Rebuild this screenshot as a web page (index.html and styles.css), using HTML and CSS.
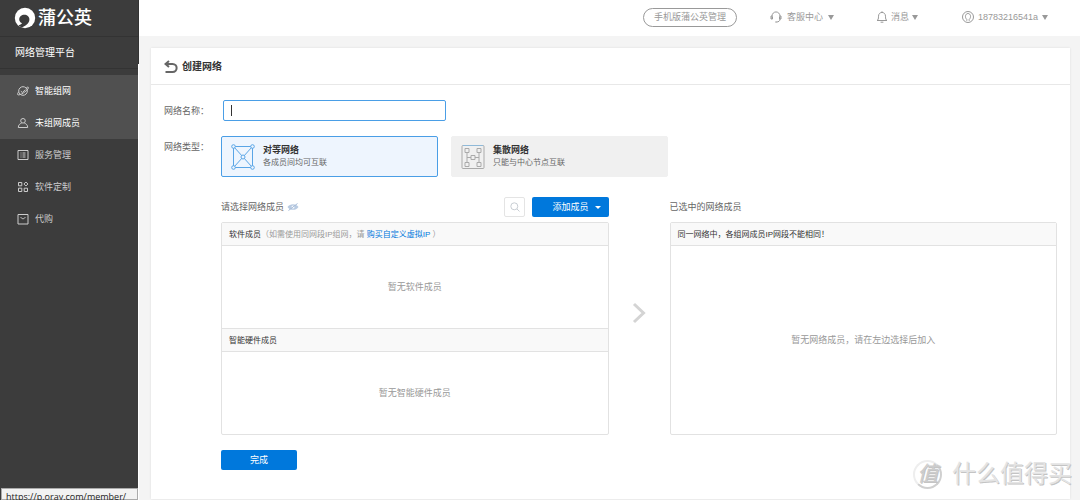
FILE: index.html
```html
<!DOCTYPE html>
<html lang="zh-CN">
<head>
<meta charset="utf-8">
<title>创建网络</title>
<link rel="stylesheet" href="styles.css">
</head>
<body>
<div class="app">
  <aside class="sidebar">
    <div class="brand">
      <svg class="brand-logo" width="22" height="22" viewBox="0 0 22 22"><circle cx="11" cy="11" r="10.2" fill="#fff"/><path d="M7.500 20.500C11 19 15.400 16.500 15.400 12.400C15.400 9.600 13 7.800 10.400 7.800C7.600 7.800 5.200 9.800 5.200 12.400C5.200 14.300 6.500 15.600 8 16C7.400 17.400 6 18 4.200 18.300Z" fill="#3c3c3c"/></svg>
      <span>蒲公英</span>
    </div>
    <div class="platform">网络管理平台</div>
    <nav class="menu">
      <div class="menu-group">
        <a class="menu-item" href="#"><svg width="12" height="12" viewBox="0 0 12 12"><circle cx="6" cy="6" r="4.300"/><path d="M9.400 2.500C11.500 1.600 12 2.400 10.800 4C9 6.400 5 9.400 2 9.900C0 10.200 0.200 8.600 1.700 7M3.800 6.200L5.400 7.500L8.300 4.600"/></svg>智能组网</a>
        <a class="menu-item" href="#"><svg width="12" height="12" viewBox="0 0 12 12"><circle cx="6" cy="3.800" r="2.300"/><path d="M4.600 6.200C2.800 6.700 1.300 8 1.300 10.500H10.700C10.700 8 9.200 6.700 7.400 6.200"/></svg>未组网成员</a>
      </div>
      <a class="menu-item" href="#"><svg width="12" height="12" viewBox="0 0 12 12"><path d="M1 1.500H11V10.500H1ZM3.500 4H4.500M5.500 4H8.500M3.500 6H4.500M5.500 6H8.500M3.500 8H4.500M5.500 8H8.500"/></svg>服务管理</a>
      <a class="menu-item" href="#"><svg width="12" height="12" viewBox="0 0 12 12"><path d="M1.500 1.500H4.800V4.800H1.500ZM1.500 7.200H4.800V10.500H1.500ZM7.200 7.200H10.500V10.500H7.200ZM8.900 1L10.900 3L8.900 5L6.900 3Z"/></svg>软件定制</a>
      <a class="menu-item" href="#"><svg width="12" height="12" viewBox="0 0 12 12"><path d="M1 1.500H11V11H1ZM3.800 4C4.300 6.300 7.700 6.300 8.200 4"/></svg>代购</a>
    </nav>
    <div class="status-bar">https://p.oray.com/member/</div>
  </aside>
  <div class="page">
    <header class="topbar">
      <button class="pill" type="button">手机版蒲公英管理</button>
      <button class="top-item service" type="button"><svg width="12" height="12" viewBox="0 0 12 12"><path d="M2 8V5.500C2 -0.600 10 -0.600 10 5.500V8C10 10 8.500 11 6.700 11M2 5H1V8H2.500V5.500M10 5H11V8H9.500V5.500M5.200 11H7"/></svg>客服中心<i class="caret"></i></button>
      <button class="top-item news" type="button"><svg width="12" height="12" viewBox="0 0 12 12"><path d="M1 9.500H11C9.800 8.800 9.500 8 9.500 5.200C9.500 0.200 2.500 0.200 2.500 5.200C2.500 8 2.200 8.800 1 9.500ZM4.600 11.200H7.400M6 1.500V0.300"/></svg>消息<i class="caret"></i></button>
      <button class="top-item account" type="button"><svg width="12" height="12" viewBox="0 0 12 12"><circle cx="6" cy="6" r="5.500"/><path d="M4.800 9.800V8.400C2.500 6.500 3.300 2.500 6 2.500C8.700 2.500 9.500 6.500 7.200 8.400V9.800"/></svg>18783216541a<i class="caret"></i></button>
    </header>
    <main class="card">
      <h1 class="card-title"><svg width="14" height="14" viewBox="0 0 14 14"><path d="M5 1L1.500 4L5 7M1.500 4H8.500C14 4 14 12 8.500 12H1.500"/></svg>创建网络</h1>
      <form class="form">
        <div class="field name-field">
          <label class="label" for="net-name">网络名称：</label>
          <input class="text-input" id="net-name" type="text">
        </div>
        <div class="field type-field">
          <span class="label">网络类型：</span>
          <div class="types">
            <label class="type selected">
              <input class="type-radio" type="radio" name="type" checked>
              <svg width="24" height="26" viewBox="0 0 24 26"><path d="M2.500 2.500H21.500V23.500H2.500ZM3 3L21 23M21 3L3 23"/><g class="nodes"><circle cx="2.500" cy="2.500" r="1.800"/><circle cx="21.500" cy="2.500" r="1.800"/><circle cx="2.500" cy="23.500" r="1.800"/><circle cx="21.500" cy="23.500" r="1.800"/><circle cx="12" cy="13" r="2"/></g></svg>
              <span class="type-text"><b>对等网络</b><span>各成员间均可互联</span></span>
            </label>
            <label class="type">
              <input class="type-radio" type="radio" name="type">
              <svg width="24" height="26" viewBox="0 0 24 26"><rect x="1" y="1.500" width="22" height="23" rx="1"/><path d="M2 1.500H22" stroke="#8fb9d8"/><path d="M4 4.500H8V8.500H4ZM16 4.500H20V8.500H16ZM4 18.500H8V22.500H4ZM16 18.500H20V22.500H16ZM10 11.500H14V15.500H10ZM6 8.500V18.500M18 8.500V18.500M6 13.500H10M14 13.500H18"/></svg>
              <span class="type-text"><b>集散网络</b><span>只能与中心节点互联</span></span>
            </label>
          </div>
        </div>
        <div class="members">
          <section class="column">
            <div class="column-head">
              <span>请选择网络成员</span>
              <svg class="eye" width="12" height="8" viewBox="0 0 12 8"><path d="M0.500 4C3 0.200 9 0.200 11.500 4C9 7.800 3 7.800 0.500 4Z" fill="#b9cbe2"/><circle cx="6" cy="4" r="1.500" fill="#fff"/><path d="M1.500 7.500L10.500 0.500" stroke="#a5bbd8"/></svg>
              <button class="search" type="button" aria-label="搜索"><svg width="10" height="10" viewBox="0 0 10 10"><circle cx="4.300" cy="4.300" r="3.500"/><path d="M7 7L9.500 9.500"/></svg></button>
              <button class="primary add" type="button">添加成员<i class="caret"></i></button>
            </div>
            <div class="panel">
              <div class="panel-head">软件成员<span class="hint">（如需使用同网段IP组网，请 <a href="#">购买自定义虚拟IP</a> ）</span></div>
              <div class="panel-body">暂无软件成员</div>
              <div class="panel-head">智能硬件成员</div>
              <div class="panel-body">暂无智能硬件成员</div>
            </div>
          </section>
          <svg class="arrow" width="14" height="22" viewBox="0 0 14 22"><path d="M2 2L11.500 11L2 20"/></svg>
          <section class="column">
            <div class="column-head">已选中的网络成员</div>
            <div class="panel">
              <div class="panel-head">同一网络中，各组网成员IP网段不能相同！</div>
              <div class="panel-body">暂无网络成员，请在左边选择后加入</div>
            </div>
          </section>
        </div>
        <button class="primary done" type="button">完成</button>
      </form>
    </main>
  </div>
</div>
<div class="watermark"><span class="seal">值</span><span>什么值得买</span></div>
</body>
</html>
```
FILE: styles.css
```css
* { box-sizing: border-box; }
body {
  margin: 0;
  overflow: hidden;
  background: #f4f4f4;
  color: #666;
  font: 9px/12px "Liberation Sans", "Noto Sans CJK SC", sans-serif;
}
button, input { font: inherit; color: inherit; }
button { padding: 0; border: 0; background: none; }
a { color: inherit; text-decoration: none; }
svg { flex: none; fill: none; stroke: currentColor; }
.app { display: flex; min-height: 100vh; }

.sidebar {
  display: flex;
  flex-direction: column;
  flex: none;
  width: 139px;
  border-right: 1px solid #fff;
  border-image: linear-gradient(#333 65px, #fff 65px) 1;
  background: #3c3c3c;
  color: #fff;
}
.brand {
  display: flex;
  align-items: center;
  gap: 2px;
  height: 37px;
  padding: 0 0 1px 14px;
  border-bottom: 1px solid #333;
  font-size: 18px;
  font-weight: 500;
  line-height: 24px;
}
.brand-logo { stroke: none; }
.platform {
  height: 32px;
  padding-left: 15px;
  border-bottom: 1px solid #333;
  font-size: 10px;
  line-height: 31px;
}
.menu { margin-top: 6px; color: #ccc; }
.menu-group { background: #505050; color: #fff; }
.menu-item {
  display: flex;
  align-items: center;
  gap: 6px;
  height: 32px;
  padding-left: 17px;
}
.menu-item svg { color: #ccc; }
.status-bar {
  height: 12px;
  margin: auto 0 0 1px;
  padding-left: 4px;
  border: 1px solid #aaa;
  background: #f2f2f2;
  color: #222;
  font: 9px/16px "Open Sans", sans-serif;
  white-space: nowrap;
}

.page { display: flex; flex: 1; flex-direction: column; min-width: 0; }
.topbar {
  display: flex;
  align-items: center;
  justify-content: flex-end;
  height: 36px;
  padding: 0 32px 2px 0;
  background: #fff;
  color: #999;
}
.pill {
  height: 19px;
  padding: 0 10px;
  border: 1px solid #999;
  border-radius: 10px;
}
.top-item { display: flex; align-items: center; gap: 4px; }
.service { margin-left: 33px; gap: 5px; }
.news { margin-left: 42px; gap: 3px; }
.account { margin-left: 44px; }
.caret {
  border: solid transparent;
  border-width: 5px 3px 0;
  border-top-color: #999;
}

.card {
  flex: 1;
  margin: 12px 10px 1px 12px;
  background: #fff;
  box-shadow: 0 0 2px #ddd;
}
.card-title {
  display: flex;
  align-items: center;
  gap: 4px;
  height: 37px;
  margin: 0;
  padding: 2px 0 0 13px;
  border-bottom: 1px solid #e8e8e8;
  color: #333;
  font-size: 10px;
  line-height: 14px;
}
.card-title svg { color: #666; stroke-width: 2; }
.form { padding: 15px 13px 20px; }
.field { display: flex; }
.label { flex: none; width: 57px; line-height: 22px; }
.text-input {
  width: 223px;
  height: 21px;
  margin-left: 2px;
  padding: 0 7px;
  border: 1px solid #4a9ee6;
  border-radius: 2px;
  outline: 0;
  background: linear-gradient(#333, #333) 7px center / 1px 11px no-repeat #fff;
}
.type-field { margin-top: 14px; }
.types { display: flex; gap: 13px; }
.type {
  display: flex;
  align-items: center;
  gap: 8px;
  width: 217px;
  height: 41px;
  padding-left: 9px;
  border: 1px solid #f0f0f0;
  border-radius: 2px;
  background: #f0f0f0;
}
.type svg { color: #aaa; }
.type.selected { border-color: #4a9ee6; background: #eef5fe; }
.type.selected svg { color: #5aa5e6; }
.nodes { fill: #eef5fe; }
.type-radio { position: absolute; opacity: 0; }
.type-text { display: flex; flex-direction: column; font-size: 8px; }
.type-text b { color: #333; font-size: 9px; line-height: 13px; }
.members { display: grid; grid-template-columns: 1fr 61px 1fr; margin: 19px 0 15px 57px; }
.column { display: flex; flex-direction: column; min-width: 0; }
.column-head { display: flex; align-items: center; height: 22px; margin-bottom: 4px; }
.eye { margin-left: 3px; stroke: none; }
.search {
  display: flex;
  align-items: center;
  justify-content: center;
  width: 21px;
  height: 20px;
  margin-left: auto;
  border: 1px solid #e4e4e4;
  border-radius: 2px;
  color: #c8cdd3;
}
.primary { border-radius: 2px; background: #0078dc; color: #fff; }
.add {
  display: flex;
  align-items: center;
  gap: 6px;
  height: 20px;
  margin-left: 7px;
  padding: 0 8px 0 20px;
}
.add .caret { border-width: 3px 3px 0; border-top-color: #fff; }
.panel {
  display: flex;
  flex: 1;
  flex-direction: column;
  border: 1px solid #e2e2e2;
  border-radius: 2px;
}
.panel-head {
  height: 23px;
  padding-left: 7px;
  border-bottom: 1px solid #e2e2e2;
  background: #f9f9f9;
  color: #333;
  font-size: 8px;
  line-height: 24px;
}
.panel-body + .panel-head { height: 24px; border-top: 1px solid #e2e2e2; }
.hint { color: #999; }
.hint a { color: #0078dc; }
.panel-body {
  display: flex;
  flex: 1;
  align-items: center;
  justify-content: center;
  min-height: 82px;
  color: #999;
}
.arrow { margin: 106px auto 0; color: #d4d4d4; stroke-width: 3; }
.done { width: 76px; height: 20px; margin-left: 57px; }

.watermark {
  position: absolute;
  right: 8px;
  bottom: 9px;
  display: flex;
  align-items: center;
  gap: 10px;
  color: #e4e4e4;
  font-size: 24px;
  line-height: 34px;
  text-shadow: 1px 1px 0 #c4c4c4;
}
.seal {
  width: 29px;
  height: 29px;
  border: 2px solid #d0d0d0;
  border-top-color: #eee;
  border-left-color: #eee;
  border-radius: 50%;
  color: #ccc;
  font-size: 21px;
  font-style: italic;
  line-height: 24px;
  text-align: center;
}
```
